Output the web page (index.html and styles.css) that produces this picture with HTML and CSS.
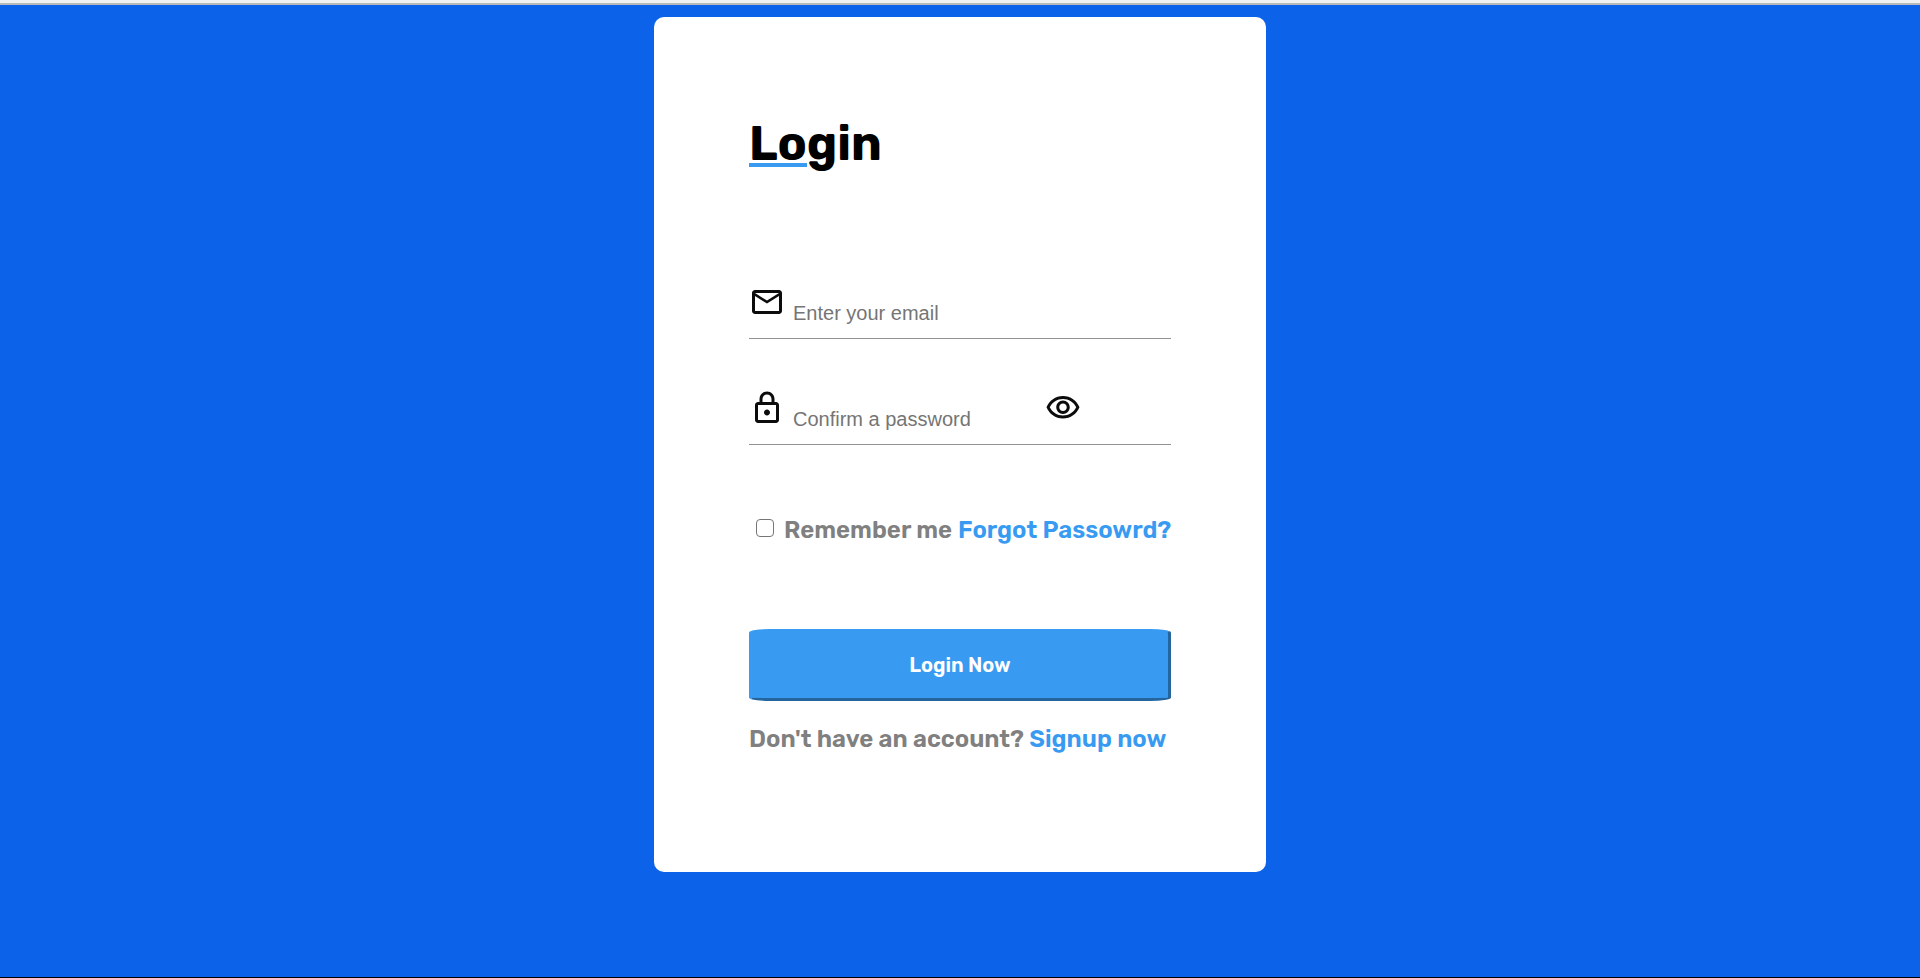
FILE: index.html
```html
<!DOCTYPE html>
<html lang="en">
<head>
<meta charset="utf-8">
<meta name="viewport" content="width=device-width, initial-scale=1">
<title>Login</title>
<link rel="stylesheet" href="styles.css">
</head>
<body>
<div class="topbar"></div>
<main class="page">
  <form class="card">
    <h1 class="title">Login</h1>
    <div class="field">
      <label class="icon" for="email" aria-label="Email">
        <svg viewBox="0 0 24 24"><path d="M22 6c0-1.100-.9-2-2-2H4c-1.100 0-2 .9-2 2v12c0 1.100.9 2 2 2h16c1.100 0 2-.9 2-2V6zm-2 0l-8 5-8-5h16zm0 12H4V8l8 5 8-5v10z"/></svg>
      </label>
      <input class="input" id="email" type="text" placeholder="Enter your email">
    </div>
    <div class="field">
      <label class="icon" for="password" aria-label="Password">
        <svg viewBox="0 0 24 24"><path d="M18 8h-1V6c0-2.760-2.240-5-5-5S7 3.240 7 6v2H6c-1.100 0-2 .9-2 2v10c0 1.100.9 2 2 2h12c1.100 0 2-.9 2-2V10c0-1.100-.9-2-2-2zM9 6c0-1.660 1.340-3 3-3s3 1.340 3 3v2H9V6zm9 14H6V10h12v10zm-6-3c1.100 0 2-.9 2-2s-.9-2-2-2-2 .9-2 2 .9 2 2 2z"/></svg>
      </label>
      <input class="input" id="password" type="password" placeholder="Confirm a password">
      <button class="icon reveal" type="button" aria-label="Show password">
        <svg viewBox="0 0 24 24"><path d="M12 6c3.790 0 7.170 2.130 8.820 5.500C19.170 14.870 15.790 17 12 17s-7.170-2.130-8.820-5.500C4.830 8.130 8.210 6 12 6m0-2C7 4 2.730 7.110 1 11.500 2.730 15.890 7 19 12 19s9.270-3.110 11-7.500C21.270 7.110 17 4 12 4zm0 5c1.380 0 2.500 1.120 2.500 2.500S13.380 14 12 14s-2.500-1.120-2.500-2.500S10.620 9 12 9m0-2c-2.480 0-4.500 2.020-4.500 4.500S9.520 16 12 16s4.500-2.020 4.500-4.500S14.480 7 12 7z"/></svg>
      </button>
    </div>
    <div class="options">
      <input class="check" id="remember" type="checkbox">
      <label class="remember" for="remember">Remember me</label>
      <a class="link" href="#">Forgot Passowrd?</a>
    </div>
    <button class="submit" type="submit">Login Now</button>
    <p class="signup">Don't have an account? <a class="link" href="#">Signup now</a></p>
  </form>
</main>
</body>
</html>
```
FILE: styles.css
```css
* {
  box-sizing: border-box;
}

body {
  margin: 0;
  min-height: 100vh;
  display: flex;
  flex-direction: column;
  background: #0c63e9;
  border-bottom: 1px solid #000;
  font-family: Rubik, Inter, "Liberation Sans", sans-serif;
}

.topbar {
  height: 5px;
  background: #f1f1f1;
  border-bottom: 2px solid #b9b9b9;
}

.page {
  flex: 1;
  padding: 12px 16px 24px;
}

.card {
  max-width: 612px;
  margin: 0 auto;
  padding: 95px 95px 117px;
  background: #fff;
  border-radius: 10px;
}

.title {
  position: relative;
  margin: 0 0 108px;
  font-size: 48px;
  line-height: 64px;
  font-weight: 700;
  color: #000;
}

.title::after {
  content: "";
  position: absolute;
  left: 0;
  bottom: 9px;
  width: 58px;
  height: 4px;
  background: #389bf1;
}

.field {
  display: flex;
  align-items: flex-start;
  height: 55px;
  margin-bottom: 51px;
  border-bottom: 1px solid #929292;
}

.icon {
  flex: none;
  width: 36px;
  height: 36px;
  padding: 0;
  border: 0;
  background: none;
}

.icon svg {
  display: block;
  width: 36px;
  height: 36px;
  fill: #0c0c0c;
}

.input {
  width: 252px;
  min-width: 0;
  height: 54px;
  margin-left: 8px;
  padding: 4px 0 0;
  border: 0;
  outline: 0;
  background: none;
  font: 20px "Liberation Sans", sans-serif;
}

.input::placeholder {
  color: #757575;
}

.reveal {
  cursor: pointer;
}

.options {
  display: flex;
  align-items: center;
  gap: 6px;
  margin-top: 69px;
  font-size: 24px;
  line-height: 32px;
  font-weight: 600;
  white-space: nowrap;
}

.check {
  flex: none;
  appearance: none;
  width: 18px;
  height: 18px;
  margin: 0 4px 4px 7px;
  border: 1px solid #767676;
  border-radius: 4px;
  background: #fff;
}

.check:checked {
  background: #389bf1;
}

.remember,
.signup {
  color: #808080;
}

.link {
  color: #389bf1;
  text-decoration: none;
}

.submit {
  display: block;
  width: 100%;
  height: 72px;
  margin-top: 83px;
  border: 3px solid;
  border-color: #389bf1 #25659d #25659d #389bf1;
  border-radius: 5%;
  background: #389bf1;
  color: #fff;
  font: inherit;
  font-size: 20px;
  font-weight: 600;
}

.signup {
  margin: 22px 0 0;
  font-size: 24px;
  line-height: 32px;
  font-weight: 600;
  white-space: nowrap;
}
```
